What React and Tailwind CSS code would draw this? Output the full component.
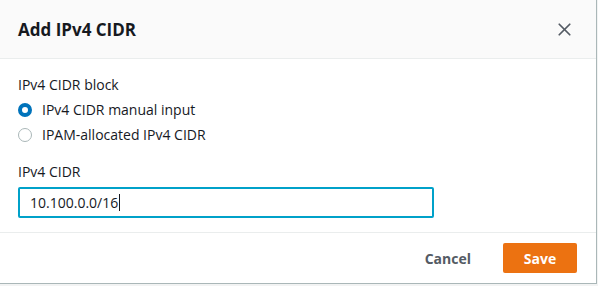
import { X } from "lucide-react";

export default function App() {
  return (
    <div className="w-[598px] h-[286px] bg-[#f2f3f3] font-['Open_Sans',sans-serif] text-[#16191f]">
      <div className="w-[597px] h-[284px] bg-white border-r border-b border-[#aab7b8] flex flex-col">
        <div className="h-[59px] bg-[#fafafa] border-b border-[#eaeded] flex items-center justify-between pl-[18px] pr-[21px]">
          <h1 className="text-[17px] font-bold leading-none">Add IPv4 CIDR</h1>
          <X size={21} strokeWidth={2} className="text-[#545b64]" />
        </div>
        <div className="flex-1 px-[18px] pt-[16px] border-b border-[#eaeded]">
          <div className="text-[14px] leading-[20px]">IPv4 CIDR block</div>
          <div className="mt-[5px] flex flex-col gap-[5px]">
            <label className="flex items-center gap-[10px] text-[14px] leading-[20px]">
              <span className="w-[14px] h-[14px] rounded-full border-[4px] border-[#0073bb] bg-white" />
              IPv4 CIDR manual input
            </label>
            <label className="flex items-center gap-[10px] text-[14px] leading-[20px]">
              <span className="w-[14px] h-[14px] rounded-full border-[1.5px] border-[#aab7b8] bg-white" />
              IPAM-allocated IPv4 CIDR
            </label>
          </div>
          <div className="mt-[17px] text-[14px] leading-[20px]">IPv4 CIDR</div>
          <div className="mt-[5px] w-[416px] h-[31px] border-2 border-[#00a1c9] rounded-[2px] flex items-center px-[10px] text-[14px]">
            10.100.0.0/16<span className="w-px h-[17px] bg-[#16191f] ml-px" />
          </div>
        </div>
        <div className="h-[50px] flex items-center justify-end gap-[32px] pr-[19px]">
          <span className="text-[14px] font-bold text-[#545b64]">Cancel</span>
          <button className="w-[74px] h-[30px] rounded-[2px] bg-[#ec7211] text-white text-[14px] font-bold">Save</button>
        </div>
      </div>
    </div>
  );
}
